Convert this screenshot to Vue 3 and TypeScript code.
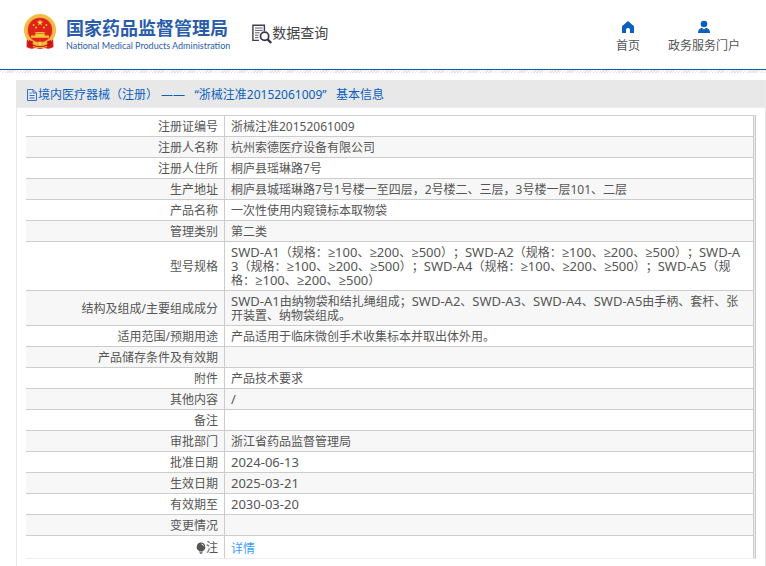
<script setup lang="ts">
interface Row {
  label: string
  value: string
  code?: boolean
}

interface Run {
  text: string
  latin: boolean
}

const rows: Row[] = [
  { label: '注册证编号', value: '浙械注准20152061009' },
  { label: '注册人名称', value: '杭州索德医疗设备有限公司' },
  { label: '注册人住所', value: '桐庐县瑶琳路7号' },
  { label: '生产地址', value: '桐庐县城瑶琳路7号1号楼一至四层，2号楼二、三层，3号楼一层101、二层' },
  { label: '产品名称', value: '一次性使用内窥镜标本取物袋' },
  { label: '管理类别', value: '第二类' },
  {
    label: '型号规格',
    value:
      'SWD-A1（规格：≥100、≥200、≥500）；SWD-A2（规格：≥100、≥200、≥500）；SWD-A3（规格：≥100、≥200、≥500）；SWD-A4（规格：≥100、≥200、≥500）；SWD-A5（规格：≥100、≥200、≥500）',
    code: true,
  },
  {
    label: '结构及组成/主要组成成分',
    value: 'SWD-A1由纳物袋和结扎绳组成；SWD-A2、SWD-A3、SWD-A4、SWD-A5由手柄、套杆、张开装置、纳物袋组成。',
    code: true,
  },
  { label: '适用范围/预期用途', value: '产品适用于临床微创手术收集标本并取出体外用。' },
  { label: '产品储存条件及有效期', value: '' },
  { label: '附件', value: '产品技术要求' },
  { label: '其他内容', value: '/', code: true },
  { label: '备注', value: '' },
  { label: '审批部门', value: '浙江省药品监督管理局' },
  { label: '批准日期', value: '2024-06-13', code: true },
  { label: '生效日期', value: '2025-03-21', code: true },
  { label: '有效期至', value: '2030-03-20', code: true },
  { label: '变更情况', value: '' },
]

// Splits a value into Latin and Chinese runs so model codes and dates can be set larger.
function runs(row: Row): Run[] {
  if (!row.code) return [{ text: row.value, latin: false }]
  const parts = row.value.match(/[\x21-\x7e≥]+|[^\x21-\x7e≥]+/g) ?? []
  return parts.map((text) => ({ text, latin: /^[\x21-\x7e≥]/.test(text) }))
}
</script>

<template>
  <div class="page" lang="zh-CN">
    <header class="top">
      <a class="brand" href="#">
        <svg class="emblem" viewBox="0 0 34 36" aria-hidden="true">
          <path d="M4 22 L3.500 33 Q8 36 12 34 L17 35 L22 34 Q26 36 30.500 33 L30 22Z" fill="#d81e1a" />
          <circle cx="17" cy="16" r="14.4" fill="#df2318" stroke="#f2bd3c" stroke-width="3.2" />
          <circle cx="17" cy="16" r="12.7" fill="none" stroke="#f7dd7a" stroke-width="0.6" />
          <path d="M17 5.2l.9 2.3 2.5.1-2 1.5.7 2.4-2.1-1.4-2.1 1.4.7-2.4-2-1.5 2.5-.1z" fill="#f8cf3a" />
          <g fill="#f5c63a">
            <circle cx="10.6" cy="11" r="1" />
            <circle cx="13" cy="13.4" r="1" />
            <circle cx="21" cy="13.4" r="1" />
            <circle cx="23.4" cy="11" r="1" />
            <path d="M13 18h8l1.5 1.600h-11z" />
            <path d="M12.4 20h9.2v1.400h4.4v2.400H8v-2.400h4.4z" />
          </g>
          <path d="M6 26 L10 27.500 L9 33 L5 32Z M28 26 L24 27.500 L25 33 L29 32Z" fill="#c81414" />
          <circle cx="17" cy="29.800" r="2.200" fill="#f7d75e" stroke="#d98a24" stroke-width="0.7" />
          <path d="M10 32.500Q17 35 24 32.500" fill="none" stroke="#f0b938" stroke-width="1.200" />
        </svg>
        <span class="brand-text">
          <strong class="brand-cn">国家药品监督管理局</strong>
          <span class="brand-en">National Medical Products Administration</span>
        </span>
      </a>
      <a class="query" href="#">
        <svg class="query-icon" viewBox="0 0 20 20" aria-hidden="true">
          <path d="M12.4 7V1.2H.9v15.2H7" fill="none" stroke="#3c3c4c" stroke-width="1.4" />
          <path d="M3 4h7.6M3 6.4h7.6M3 8.8h4.6M3 11.2h3.4M3 13.6h3.4" stroke="#5c5c6a" stroke-width="1" />
          <circle cx="12.6" cy="12.2" r="4.1" fill="none" stroke="#33334a" stroke-width="1.7" />
          <path d="M15.6 15.4l3.6 3.6" stroke="#33334a" stroke-width="2.3" />
        </svg>
        <span>数据查询</span>
      </a>
      <nav class="nav">
        <a class="nav-item" href="#">
          <svg class="nav-icon" viewBox="0 0 14 14" aria-hidden="true">
            <path d="M7 1L1 6.2V13h4V9.6Q5 8 7 8t2 1.600V13h4V6.200z" fill="#0a5fc0" />
          </svg>
          <span>首页</span>
        </a>
        <a class="nav-item" href="#">
          <svg class="nav-icon" viewBox="0 0 14 14" aria-hidden="true">
            <circle cx="7" cy="4" r="3.300" fill="#0a5fc0" />
            <path d="M1 13Q1 8.600 5 7.800L7 9.600 9 7.800Q13 8.600 13 13z" fill="#0a5fc0" />
          </svg>
          <span>政务服务门户</span>
        </a>
      </nav>
    </header>
    <div class="stripes"></div>

    <main class="panel">
      <h1 class="title">
        <svg class="title-icon" viewBox="0 0 12 12" aria-hidden="true">
          <path d="M1.500 .5h5.500l3.500 3.500v7.500h-9zM7 .5v3.500h3.500M3.500 4h2M3.500 6.500h5M3.500 9h5" fill="none" stroke="#2f72c8" />
        </svg>
        <span>境内医疗器械（注册） ——&nbsp;&nbsp; “浙械注准20152061009”&nbsp;&nbsp; 基本信息</span>
      </h1>
      <div class="body">
        <div class="frame">
          <table class="info">
            <tbody>
              <tr v-for="row in rows" :key="row.label">
                <th scope="row">{{ row.label }}</th>
                <td><span v-for="(run, i) in runs(row)" :key="i" :class="{ latin: run.latin }">{{ run.text }}</span></td>
              </tr>
              <tr class="note">
                <th scope="row">
                  <svg class="bulb" viewBox="0 0 10 12" aria-hidden="true">
                    <path d="M5 .5a4.400 4.400 0 0 1 2.400 8L6.800 9.500H3.200L2.600 8.500A4.400 4.400 0 0 1 5 .5zM3.500 10.200h3v.8l-.8.7H4.300l-.8-.7z" fill="#555" />
                    <path d="M5.400 2q2 .3 2.300 2.300" fill="none" stroke="#fff" stroke-width=".8" />
                  </svg>注
                </th>
                <td><a class="detail" href="#">详情</a></td>
              </tr>
            </tbody>
          </table>
        </div>
      </div>
    </main>
  </div>
</template>

<style>
body {
  margin: 0;
  background: #fff;
}
</style>

<style scoped>
.page {
  font-family: 'Noto Sans', 'Open Sans', 'Noto Sans CJK SC', sans-serif;
  font-size: 12px;
  line-height: 14px;
  color: #555;
  text-spacing-trim: space-all;
}

a {
  color: inherit;
  text-decoration: none;
}

.top {
  display: flex;
  align-items: flex-start;
  box-sizing: border-box;
  height: 70px;
  padding: 14px 26px 0 23px;
  border-bottom: 1px solid #0a5fb4;
}

.brand {
  display: flex;
  gap: 9px;
  color: #2a5caa;
}

.emblem {
  width: 34px;
  height: 36px;
}

.brand-text {
  display: flex;
  flex-direction: column;
  gap: 1px;
  padding-top: 3px;
  white-space: nowrap;
}

.brand-cn {
  font-size: 18px;
  line-height: 22px;
}

.brand-en {
  font-family: Lato, sans-serif;
  font-size: 9px;
  line-height: 12px;
}

.query {
  display: flex;
  margin: 10px 0 0 22px;
  font-size: 14px;
  line-height: 18px;
  color: #444;
}

.query-icon {
  width: 20px;
  height: 20px;
}

.nav {
  display: flex;
  gap: 28px;
  margin: 6px 0 0 auto;
}

.nav-item {
  display: flex;
  flex-direction: column;
  align-items: center;
  gap: 5px;
}

.nav-icon {
  width: 14px;
  height: 14px;
}

.stripes {
  height: 3px;
  background: repeating-linear-gradient(135deg, #fff 0 1px, #e2e2e2 1px 2px);
}

.panel {
  margin: 7px 0 0 16px;
  border: 1px solid #e9e9ec;
  border-top: 0;
  border-bottom: 0;
}

.title {
  display: flex;
  align-items: center;
  box-sizing: border-box;
  height: 28px;
  margin: 0;
  padding: 2px 9px 0;
  border-bottom: 1px solid #ebeef5;
  background: #e8e8e8;
  font-size: 12px;
  font-weight: 400;
  color: #0a5fc0;
}

.title-icon {
  width: 12px;
  height: 12px;
}

.body {
  padding: 7px 9px;
}

.frame {
  padding-right: 1px;
  border-right: 1px solid #c8c8ce;
  background: #ebebf0;
}

.info {
  width: 100%;
  border-spacing: 0;
  border-bottom: 1px solid #ebeef5;
  background: #fff;
}

.info th,
.info td {
  box-sizing: border-box;
  height: 21px;
  padding: 4px 6px 2px;
  border-top: 1px solid #ccc;
  border-right: 1px solid #ccc;
  font-weight: 400;
  vertical-align: middle;
}

.info th {
  width: 199px;
  text-align: right;
}

.info td {
  word-break: break-all;
}

.info tr:nth-child(even) {
  background: #f7f7f7;
}

.info .note {
  background: #fff;
}

.info .note th,
.info .note td {
  height: 23px;
}

.info .note td {
  padding-top: 6px;
}

.latin {
  font-size: 13px;
  line-height: 12px;
}

.bulb {
  width: 10px;
  height: 12px;
  vertical-align: -2px;
}

.detail {
  color: #409eff;
}
</style>
